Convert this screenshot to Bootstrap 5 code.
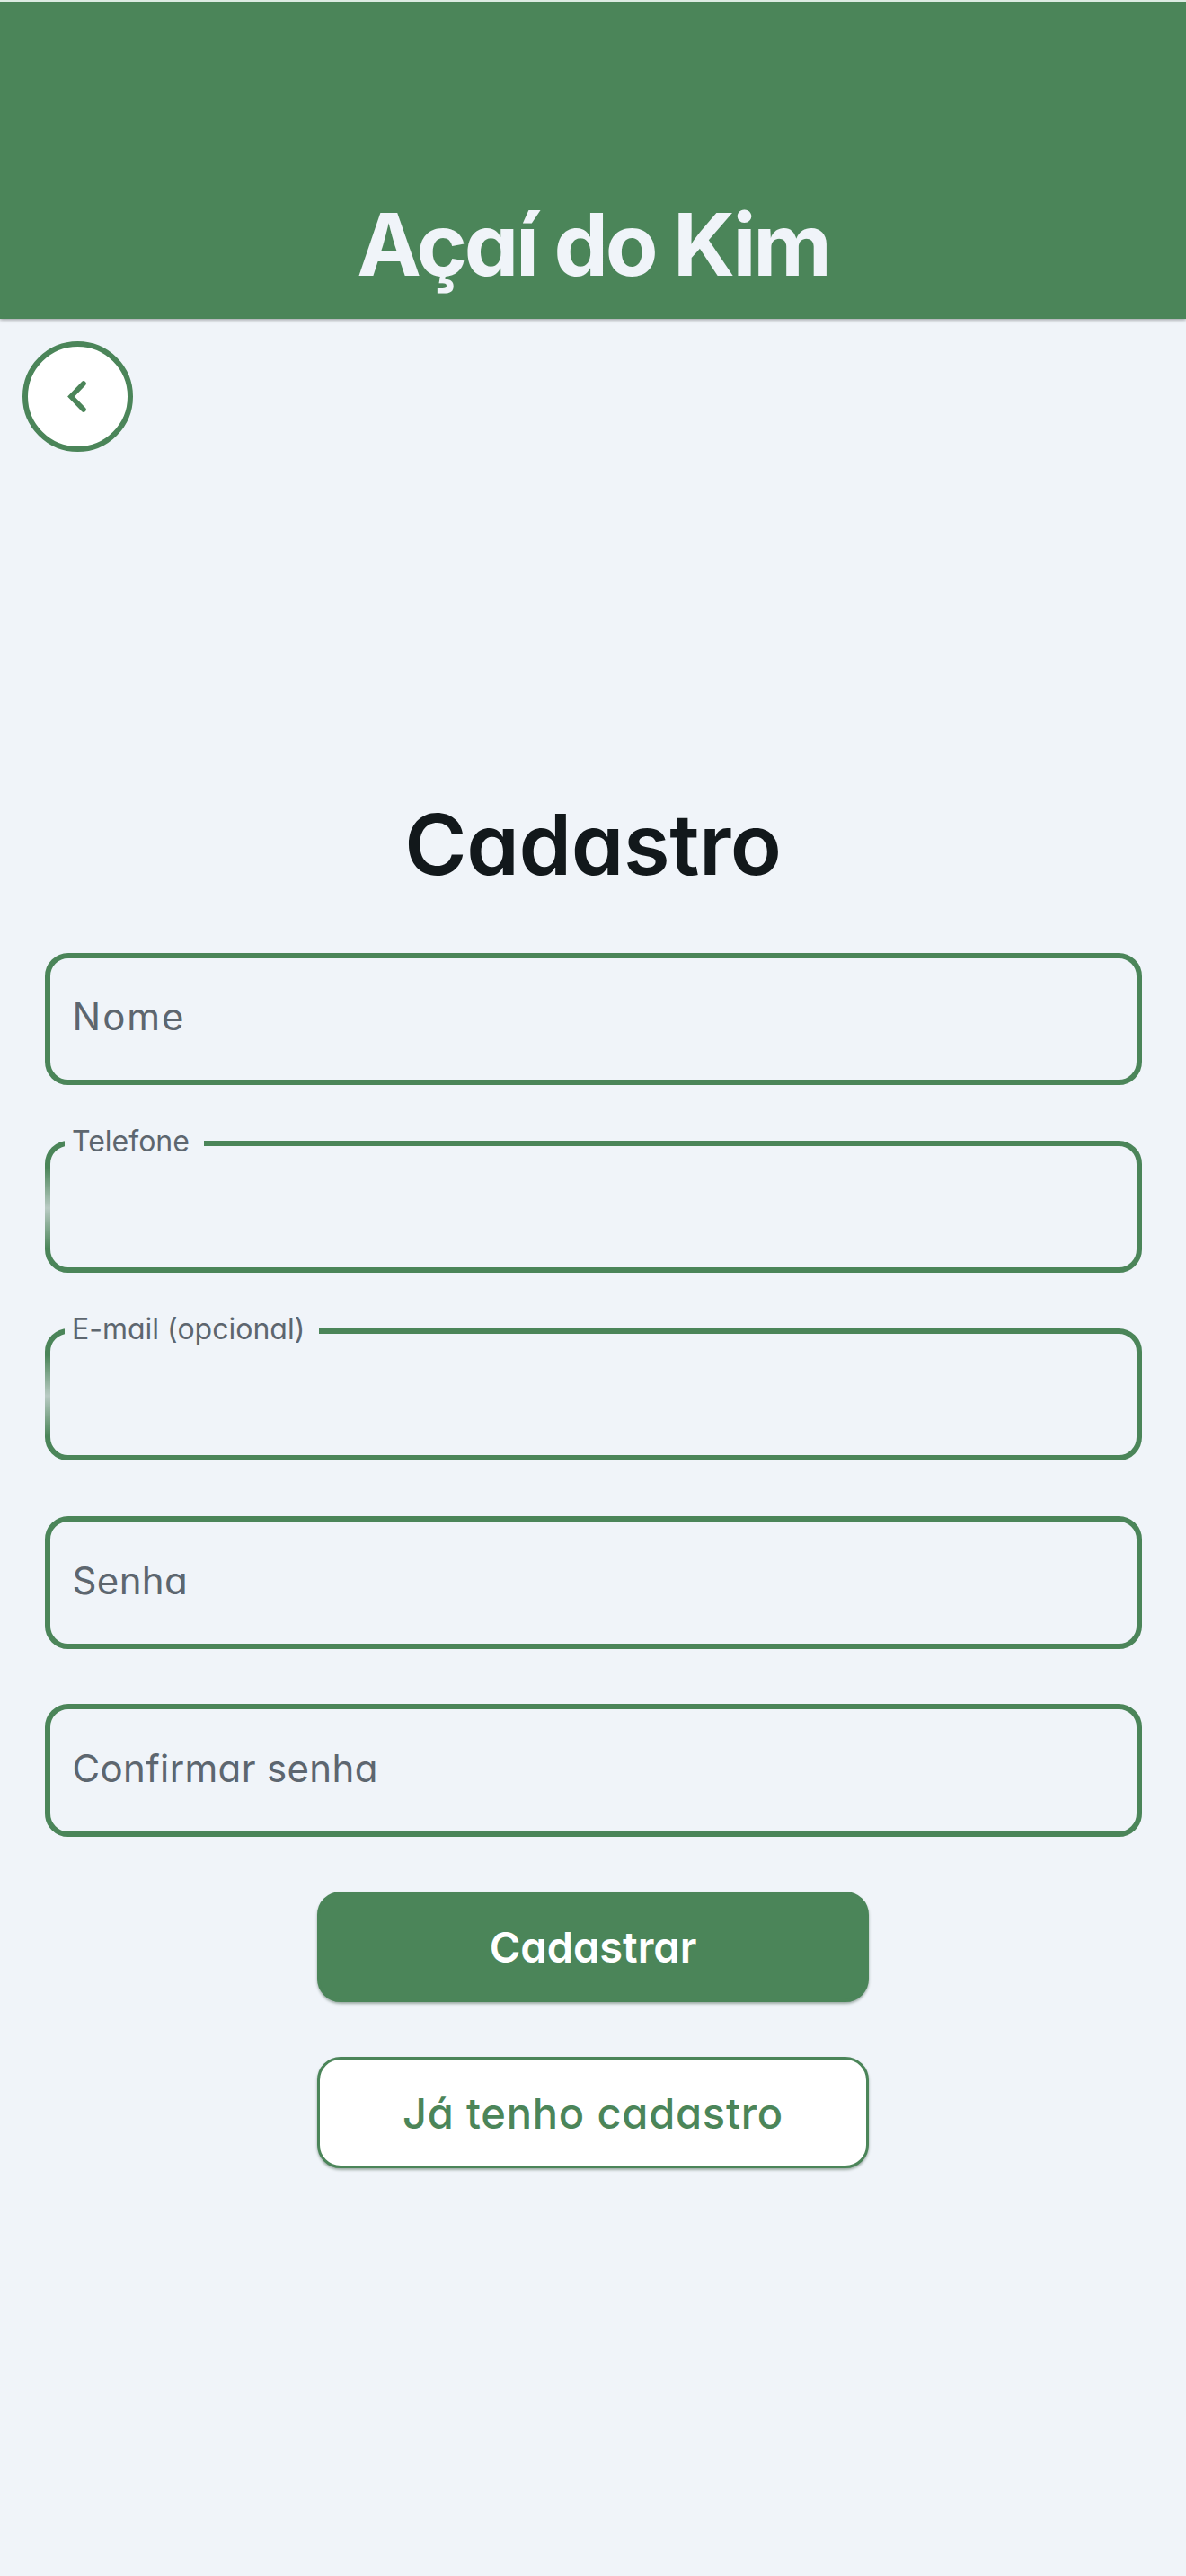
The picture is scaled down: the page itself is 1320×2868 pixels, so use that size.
<!DOCTYPE html>
<html lang="pt-BR">
<head>
<meta charset="utf-8">
<meta name="viewport" content="width=device-width, initial-scale=1">
<title>Açaí do Kim - Cadastro</title>
<link rel="stylesheet" href="https://cdn.jsdelivr.net/npm/bootstrap@5.3.0/dist/css/bootstrap.min.css">
<style>
  :root { --kim-green: #4b8559; --kim-bg: #f0f4f9; --kim-gray: #5d666f; }
  body {
    min-height: 2868px;
    background: var(--kim-bg);
    font-family: Inter, "Liberation Sans", sans-serif;
  }
  body, input, button { font-feature-settings: "cv11"; }
  .app-header {
    height: 355px;
    padding-bottom: 35px;
    background: var(--kim-green);
    border-top: 2px solid #dcebe2;
    box-shadow: 0 1px 4px rgba(0, 0, 0, .4);
  }
  .app-title { font-size: 96px; line-height: 96px; font-weight: 650; letter-spacing: -3.2px; color: var(--kim-bg); }
  .back-row { padding: 25px 0 0 25px; height: 535px; }
  .btn-back { width: 123px; height: 123px; border: 6px solid var(--kim-green); background: #fff; }
  .form-title { font-size: 94px; line-height: 100px; font-weight: 570; letter-spacing: -.4px; color: #12181b; margin-bottom: 70.5px; }
  .form-area { padding: 0 49.5px; }
  .field-stack { gap: 61.7px; }
  .field .form-control {
    height: 147.5px;
    padding: 0 0 5px 25px;
    border: 6px solid var(--kim-green);
    border-radius: 26px;
    background: transparent;
    font-size: 42px;
    letter-spacing: .35px;
    color: #12181b;
  }
  .field .form-control::placeholder { color: var(--kim-gray); opacity: 1; }
  .field .wide-text { letter-spacing: 2px; }
  .notch-label {
    left: 22px;
    top: -15px;
    width: 155px;
    padding-left: 8.5px;
    background: var(--kim-bg);
    color: var(--kim-gray);
    font-size: 32px;
    line-height: 32px;
    white-space: nowrap;
  }
  .notch-wide { width: 283px; padding-left: 8.5px; }
  .edge-fade::after {
    content: "";
    position: absolute;
    left: 0; top: 30px;
    width: 6px; height: 90px;
    background: linear-gradient(rgba(205, 215, 215, 0), rgba(205, 215, 215, .85) 50%, rgba(205, 215, 215, 0));
  }
  .action-stack { padding-top: 61px; gap: 61px; }
  .btn-action {
    width: 614px;
    height: 123.5px;
    border: 3px solid var(--kim-green);
    border-radius: 26px;
    font-size: 47px;
    line-height: 1;
    box-shadow: 0 2px 3px rgba(30, 60, 40, .4);
  }
  .btn-main { background: var(--kim-green); color: #fff; font-weight: 640; }
  .btn-alt { background: #fff; color: var(--kim-green); font-weight: 540; letter-spacing: .8px; }
</style>
<script src="https://cdn.jsdelivr.net/npm/bootstrap@5.3.0/dist/js/bootstrap.bundle.min.js"></script>
</head>
<body>
<header class="app-header d-flex align-items-end justify-content-center">
  <h1 class="app-title m-0">Açaí do Kim</h1>
</header>
<main>
  <div class="back-row">
    <button type="button" class="btn btn-back rounded-circle p-0 d-flex align-items-center justify-content-center" aria-label="Voltar">
      <svg width="40" height="44" viewBox="0 0 40 44" fill="none" stroke="#4b8559" stroke-width="5.6" stroke-linecap="round" stroke-linejoin="miter"><path d="M26 7 L12 21.500 L26 36"/></svg>
    </button>
  </div>
  <form class="form-area">
    <h2 class="form-title text-center">Cadastro</h2>
    <div class="field-stack d-flex flex-column">
      <div class="field"><input class="form-control wide-text" type="text" placeholder="Nome"></div>
      <div class="field edge-fade position-relative">
        <input class="form-control" id="telefone" type="tel">
        <label class="notch-label position-absolute" for="telefone">Telefone</label>
      </div>
      <div class="field edge-fade position-relative">
        <input class="form-control" id="email" type="email">
        <label class="notch-label notch-wide position-absolute" for="email">E-mail (opcional)</label>
      </div>
      <div class="field"><input class="form-control" type="password" placeholder="Senha"></div>
      <div class="field"><input class="form-control" type="password" placeholder="Confirmar senha"></div>
    </div>
    <div class="action-stack d-flex flex-column align-items-center">
      <button type="button" class="btn btn-action btn-main">Cadastrar</button>
      <button type="button" class="btn btn-action btn-alt">Já tenho cadastro</button>
    </div>
  </form>
</main>
</body>
</html>
